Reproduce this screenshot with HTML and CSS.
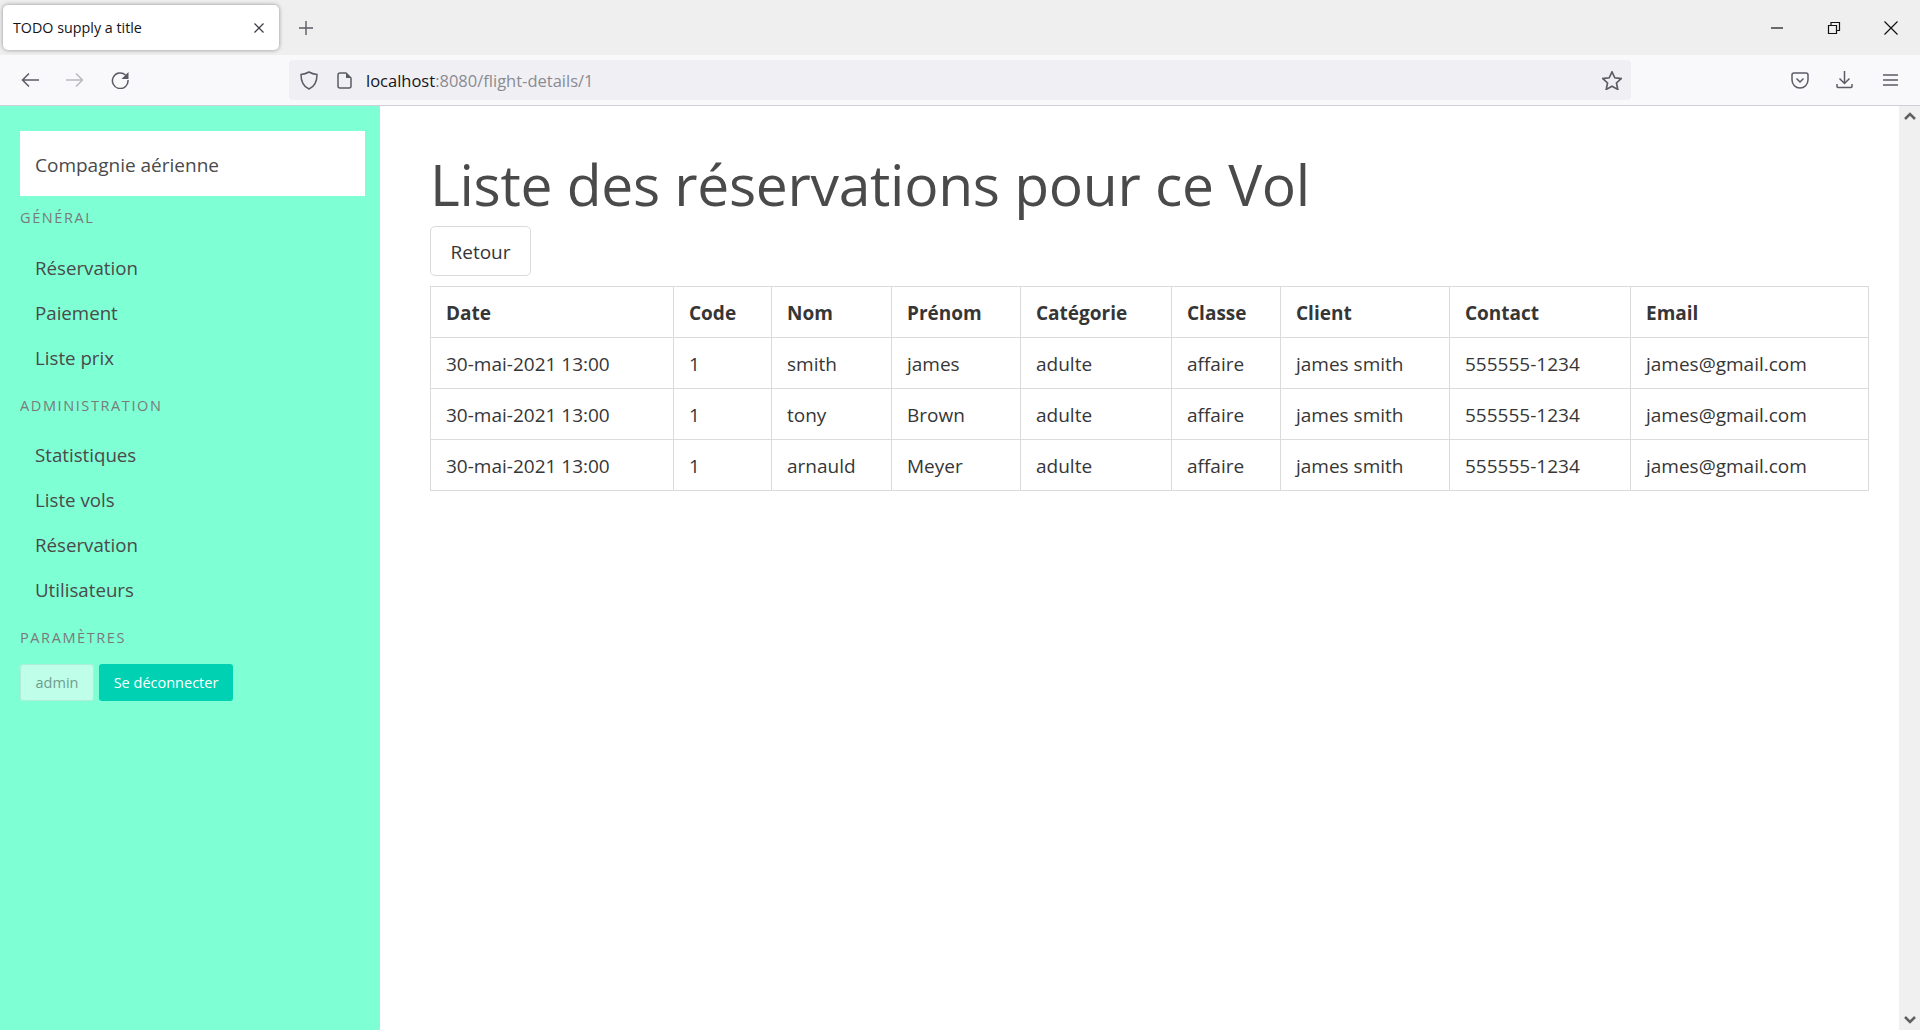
FILE: index.html
```html
<!DOCTYPE html>
<html lang="fr">
<head>
    <meta charset="UTF-8">
    <title>TODO supply a title</title>
    <link rel="stylesheet" href="styles.css">
</head>
<body>
    <div class="tabbar">
        <div class="tab">
            <span class="tab-title">TODO supply a title</span>
            <svg class="tab-close" width="10" height="10" viewBox="0 0 10 10"><path d="M.5.500l9 9M9.500.500l-9 9"/></svg>
        </div>
        <svg class="new-tab" width="16" height="16" viewBox="0 0 16 16"><path d="M8 1v14M1 8h14"/></svg>
        <div class="window-controls">
            <svg width="14" height="14" viewBox="0 0 14 14"><path d="M1 7h12"/></svg>
            <svg width="14" height="14" viewBox="0 0 14 14"><path d="M1.500 4.500h8v8h-8zM4 4.500v-3h8.500v8h-3"/></svg>
            <svg width="14" height="14" viewBox="0 0 14 14"><path d="M.5.500l13 13M13.500.500l-13 13"/></svg>
        </div>
    </div>
    <div class="toolbar">
        <svg class="nav-icon" width="18" height="16" viewBox="0 0 18 16"><path d="M18 8H1.500M8 1.500L1.500 8 8 14.500"/></svg>
        <svg class="nav-icon disabled" width="18" height="16" viewBox="0 0 18 16"><path d="M0 8h16.500M10 1.500L16.500 8 10 14.500"/></svg>
        <svg class="nav-icon" width="18" height="18" viewBox="0 0 18 18"><path d="M14.500 4A7.800 7.800 0 1 0 17 9"/><path class="solid" d="M17.500 1v7h-7z"/></svg>
        <div class="urlbar">
            <svg class="shield" width="18" height="19" viewBox="0 0 18 19"><path d="M9 1C7 2.200 4 3.200 1 3.500 1 10 3 15.500 9 18c6-2.500 8-8 8-14.500C14 3.200 11 2.200 9 1z"/></svg>
            <svg class="doc" width="15" height="17" viewBox="0 0 15 17"><path d="M3 1h6l5 5v8a2 2 0 0 1-2 2H3a2 2 0 0 1-2-2V3a2 2 0 0 1 2-2z"/><path class="solid" d="M9 1l5 5H9z"/></svg>
            <span class="url"><span class="url-host">localhost</span>:8080/flight-details/1</span>
            <svg class="star" width="20" height="19" viewBox="1 .7 18 17.100"><path d="M10 1.500l2.500 5.300 5.800.7-4.300 4 1.200 5.800-5.200-2.900-5.200 2.900L6 11.500l-4.300-4 5.800-.7z"/></svg>
        </div>
        <div class="toolbar-right">
            <svg width="18" height="17" viewBox="0 0 18 17"><path d="M3 1h12a2 2 0 0 1 2 2v5a8 8 0 0 1-16 0V3a2 2 0 0 1 2-2z"/><path d="M5.500 6.500L9 10l3.500-3.500"/></svg>
            <svg class="download" width="17" height="19" viewBox="0 0 17 19"><path d="M8.500 1v12M3.500 8.500l5 5 5-5M1 14v2.500a1 1 0 0 0 1 1h13a1 1 0 0 0 1-1V14"/></svg>
            <svg class="menu-icon" width="15" height="14" viewBox="0 0 15 14"><path d="M0 2h15M0 7h15M0 12h15"/></svg>
        </div>
    </div>
    <div class="page">
        <aside class="sidebar">
            <div class="brand">Compagnie aérienne</div>
            <p class="menu-label">Général</p>
            <ul class="menu-list">
                <li>Réservation</li>
                <li>Paiement</li>
                <li>Liste prix</li>
            </ul>
            <p class="menu-label">Administration</p>
            <ul class="menu-list">
                <li>Statistiques</li>
                <li>Liste vols</li>
                <li>Réservation</li>
                <li>Utilisateurs</li>
            </ul>
            <p class="menu-label">Paramètres</p>
            <div class="buttons">
                <button class="btn-small btn-admin" type="button">admin</button>
                <button class="btn-small btn-logout" type="button">Se déconnecter</button>
            </div>
        </aside>
        <main class="content">
            <h1>Liste des réservations pour ce Vol</h1>
            <button class="btn-back" type="button">Retour</button>
            <table>
                <colgroup>
                    <col class="col-date"><col class="col-code"><col class="col-nom"><col class="col-prenom"><col class="col-cat">
                    <col class="col-classe"><col class="col-client"><col class="col-contact"><col class="col-email">
                </colgroup>
                <thead>
                    <tr><th>Date</th><th>Code</th><th>Nom</th><th>Prénom</th><th>Catégorie</th><th>Classe</th><th>Client</th><th>Contact</th><th>Email</th></tr>
                </thead>
                <tbody>
                    <tr><td>30-mai-2021 13:00</td><td>1</td><td>smith</td><td>james</td><td>adulte</td><td>affaire</td><td>james smith</td><td>555555-1234</td><td>james@gmail.com</td></tr>
                    <tr><td>30-mai-2021 13:00</td><td>1</td><td>tony</td><td>Brown</td><td>adulte</td><td>affaire</td><td>james smith</td><td>555555-1234</td><td>james@gmail.com</td></tr>
                    <tr><td>30-mai-2021 13:00</td><td>1</td><td>arnauld</td><td>Meyer</td><td>adulte</td><td>affaire</td><td>james smith</td><td>555555-1234</td><td>james@gmail.com</td></tr>
                </tbody>
            </table>
        </main>
        <div class="scrollbar">
            <svg width="12" height="8" viewBox="0 0 12 8"><path d="M1 7l5-5 5 5"/></svg>
            <svg width="12" height="8" viewBox="0 0 12 8"><path d="M1 1l5 5 5-5"/></svg>
        </div>
    </div>
</body>
</html>
```

FILE: styles.css
```css
* {
    box-sizing: border-box;
}
html, body {
    height: 100%;
}
body {
    margin: 0;
    display: flex;
    flex-direction: column;
    overflow: hidden;
    font-family: "Open Sans", "Noto Sans", sans-serif;
    font-size: 19px;
    color: #4a4a4a;
    background: #fff;
}
svg {
    fill: none;
    stroke: #5b5b66;
    stroke-width: 1.5;
    flex-shrink: 0;
}
svg .solid {
    fill: #5b5b66;
    stroke: none;
}

/* browser chrome */
.tabbar {
    height: 55px;
    background: #efefef;
    display: flex;
    align-items: center;
    flex-shrink: 0;
    padding: 0 22px 0 3px;
}
.tab {
    width: 276px;
    height: 45px;
    background: #fff;
    border-radius: 5px;
    box-shadow: 0 0 4px rgba(0, 0, 0, 0.4);
    display: flex;
    align-items: center;
    justify-content: space-between;
    padding: 0 15px 0 10px;
}
.tab-title {
    font-size: 14.3px;
    color: #15141a;
}
.tab-close {
    stroke: #3a3a40;
    stroke-width: 1.2;
}
.new-tab {
    margin-left: 19px;
    stroke-width: 1.4;
}
.window-controls {
    margin-left: auto;
    display: flex;
    gap: 43px;
}
.window-controls svg {
    stroke: #111;
    stroke-width: 1.2;
}
.toolbar {
    height: 51px;
    flex-shrink: 0;
    background: #f9f9fb;
    border-bottom: 1px solid #cfcfd8;
    display: flex;
    align-items: center;
    padding: 0 22px 0 21px;
}
.nav-icon {
    margin-right: 27px;
}
.nav-icon.disabled {
    opacity: 0.4;
}
.urlbar {
    margin-left: 133px;
    width: 1342px;
    height: 40px;
    background: #f0f0f4;
    border-radius: 4px;
    display: flex;
    align-items: center;
    padding: 0 9px 0 11px;
}
.doc {
    margin-left: 19px;
}
.url {
    margin-left: 14px;
    font-size: 16.5px;
    color: #8a8a92;
}
.url-host {
    color: #15141a;
}
.star {
    margin-left: auto;
}
.toolbar-right {
    margin-left: auto;
    display: flex;
    align-items: center;
    gap: 27px;
}
.download {
    margin-top: -2px;
}
.menu-icon {
    margin-left: 3px;
}

/* page */
.page {
    flex: 1;
    display: flex;
    min-height: 0;
}
.sidebar {
    width: 380px;
    flex-shrink: 0;
    background: #7fffd4;
    padding: 25px 15px 0 20px;
}
.brand {
    background: #fff;
    padding: 18.500px 15px 16.500px;
    line-height: 30px;
}
.menu-label {
    margin: 15px 0 14.500px;
    font-size: 14.5px;
    line-height: 22.500px;
    letter-spacing: 1.6px;
    text-transform: uppercase;
    color: #7a7a7a;
}
.brand + .menu-label {
    margin: 10.500px 0 15.500px;
}
.menu-list {
    list-style: none;
    margin: 0;
    padding: 0;
    font-size: 18.7px;
}
.menu-list li {
    padding: 8.500px 15px 6.500px;
    line-height: 30px;
}
.buttons {
    display: flex;
    gap: 5px;
    margin-top: 2px;
}
.btn-small {
    height: 37px;
    padding: 0;
    font-family: inherit;
    font-size: 14.5px;
    border-radius: 3px;
}
.btn-admin {
    width: 74px;
    background: #bfffe9;
    border: 1px solid #aeeed9;
    color: #6f9c8d;
}
.btn-logout {
    width: 134px;
    background: #00d1b2;
    border: 1px solid transparent;
    color: #fff;
}
.content {
    flex: 1;
    min-width: 0;
    padding: 44px 30px 0 50px;
}
h1 {
    margin: 0 0 8px;
    font-size: 57px;
    font-weight: 400;
    line-height: 68px;
    letter-spacing: -0.3px;
    color: #4a4a4a;
}
.btn-back {
    display: block;
    width: 101px;
    height: 50px;
    padding: 2px 0 0;
    background: #fff;
    border: 1px solid #dbdbdb;
    border-radius: 5px;
    font-family: inherit;
    font-size: 19px;
    color: #363636;
}
table {
    margin-top: 10px;
    width: 1438px;
    table-layout: fixed;
    border-collapse: collapse;
    color: #363636;
}
th, td {
    border: 1px solid #dbdbdb;
    padding: 11px 15px 9px;
    line-height: 30px;
    text-align: left;
    white-space: nowrap;
}
th {
    font-weight: 700;
}
.col-date { width: 243px; }
.col-code { width: 98px; }
.col-nom { width: 120px; }
.col-prenom { width: 129px; }
.col-cat { width: 151px; }
.col-classe { width: 109px; }
.col-client { width: 169px; }
.col-contact { width: 181px; }
.col-email { width: 238px; }
.scrollbar {
    width: 21px;
    flex-shrink: 0;
    background: #f0f0f0;
    display: flex;
    flex-direction: column;
    align-items: center;
    justify-content: space-between;
    padding: 6px 0;
}
.scrollbar svg {
    stroke: #606060;
    stroke-width: 2.5;
}
```
